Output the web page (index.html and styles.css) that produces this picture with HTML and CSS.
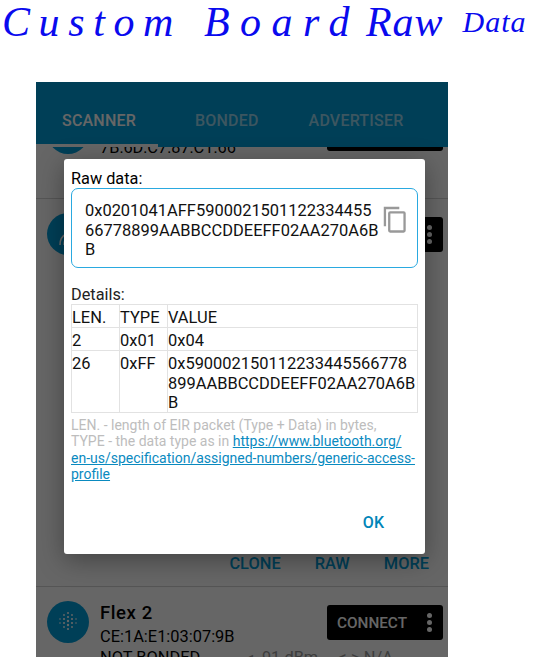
FILE: index.html
```html
<!DOCTYPE html>
<html lang="en">
<head>
  <meta charset="UTF-8">
  <title>Custom Board Raw Data</title>
  <meta name="viewport" content="width=device-width, initial-scale=1.0">
  <link rel="stylesheet" href="styles.css">
</head>
<body>
  <h1 class="ink-title">
    <span class="word-custom">Custom</span>
    <span class="word-board">Board</span>
    <span class="word-raw">Raw</span>
    <span class="word-data">Data</span>
  </h1>
  <div class="phone">
    <div class="appbar">
      <span class="tab active">SCANNER</span>
      <span class="tab tab-bonded">BONDED</span>
      <span class="tab tab-adv">ADVERTISER</span>
      <div class="tab-line"></div>
    </div>
    <div class="list">
      <div class="device first">
        <div class="avatar"></div>
        <div class="device-text">
          <div class="device-name">&nbsp;</div>
          <div class="device-addr">7B:6D:C7:87:C1:66</div>
        </div>
        <div class="connect"><span>CONNECT</span><i class="dots"></i></div>
      </div>
      <div class="device expanded">
        <div class="device-top">
          <div class="avatar">
            <svg width="42" height="42" viewBox="0 0 42 42" fill="none" stroke="#fff" stroke-width="1.6">
              <path d="M13 32c0-5 2-9 6-11"/>
              <path d="M17 32c0-3 1-6 3-7"/>
            </svg>
          </div>
          <div class="connect"><span>CONNECT</span><i class="dots"></i></div>
        </div>
        <div class="actions">
          <span>CLONE</span>
          <span>RAW</span>
          <span>MORE</span>
        </div>
      </div>
      <div class="device">
        <div class="avatar">
          <svg width="42" height="42" viewBox="0 0 42 42" fill="#fff">
            <circle cx="21" cy="12" r="1"/><circle cx="21" cy="16" r="1.1"/><circle cx="21" cy="20" r="1.2"/><circle cx="21" cy="24" r="1.2"/><circle cx="21" cy="28" r="1.1"/>
            <circle cx="17" cy="14" r=".9"/><circle cx="17" cy="18" r="1.1"/><circle cx="17" cy="22" r="1.1"/><circle cx="17" cy="26" r=".9"/>
            <circle cx="25" cy="14" r=".9"/><circle cx="25" cy="18" r="1.1"/><circle cx="25" cy="22" r="1.1"/><circle cx="25" cy="26" r=".9"/>
            <circle cx="13" cy="18" r=".8"/><circle cx="13" cy="22" r=".8"/><circle cx="29" cy="18" r=".8"/><circle cx="29" cy="22" r=".8"/>
          </svg>
        </div>
        <div class="device-text">
          <div class="device-name">Flex 2</div>
          <div class="device-addr">CE:1A:E1:03:07:9B</div>
          <div class="device-addr">NOT BONDED<span class="signal">&#9666; -91 dBm</span><span class="signal-b">&lt;-&gt; N/A</span></div>
        </div>
        <div class="connect"><span>CONNECT</span><i class="dots"></i></div>
      </div>
    </div>
    <div class="scrim"></div>
    <div class="dialog">
      <div class="dialog-label">Raw data:</div>
      <div class="raw-box">
        <div class="raw-value">0x0201041AFF5900021501122334455 66778899AABBCCDDEEFF02AA270A6B B</div>
        <svg class="copy-icon" width="23" height="27" viewBox="0 0 24 28" fill="none" stroke="#999" stroke-width="2.4">
          <path d="M2 21V2h15"/>
          <rect x="6.5" y="6.5" width="16" height="20" rx="1"/>
        </svg>
      </div>
      <div class="dialog-label details">Details:</div>
      <table class="eir">
        <tr><td class="c-len">LEN.</td><td class="c-type">TYPE</td><td>VALUE</td></tr>
        <tr><td>2</td><td>0x01</td><td>0x04</td></tr>
        <tr><td>26</td><td>0xFF</td><td>0x590002150112233445566778 899AABBCCDDEEFF02AA270A6B B</td></tr>
      </table>
      <p class="note">LEN. - length of EIR packet (Type + Data) in bytes,<br>TYPE - the data type as in <a href="#">https://www.bluetooth.org/<br>en-us/specification/assigned-numbers/generic-access-<br>profile</a></p>
      <div class="dialog-actions"><span class="ok">OK</span></div>
    </div>
  </div>
</body>
</html>
```

FILE: styles.css
```css
* { box-sizing:border-box; }
html, body { margin:0; height:100%; }
body { background:#fff; font-family:Roboto,'Liberation Sans',sans-serif; overflow:hidden; }

.ink-title { height:82px; margin:0; padding:0 0 0 2px; display:flex; align-items:flex-start; font-family:'Liberation Serif',serif; font-style:italic; font-weight:normal; font-size:42px; line-height:44px; color:#0a0aee; white-space:nowrap; }
.word-custom { letter-spacing:8.6px; }
.word-board { margin-left:22px; letter-spacing:10.5px; }
.word-raw { margin-left:6px; letter-spacing:1px; }
.word-data { margin-left:19px; font-size:30px; letter-spacing:1px; }

.phone { position:relative; width:412px; height:575px; margin-left:36px; overflow:hidden; background:#fff; }
.appbar { position:relative; z-index:1; height:65px; background:#009dd9; display:flex; align-items:center; padding:11px 0 0 26px; font-size:16px; font-weight:500; letter-spacing:.2px; color:#fff; }
.tab { color:rgba(255,255,255,.6); }
.tab.active { color:#fff; }
.tab-bonded { margin-left:59px; }
.tab-adv { margin-left:50px; }
.tab-line { position:absolute; left:0; bottom:0; width:122px; height:3px; background:#fff; }

.list { margin-top:-49px; }
.device { display:flex; height:101px; padding:14px 5px 0 11px; border-bottom:1px solid #d4d4d4; overflow:hidden; }
.avatar { flex:none; width:42px; height:42px; border-radius:50%; background:#009dd9; }
.avatar svg { display:block; }
.device-text { flex:1; min-width:0; padding-left:11px; }
.device-name { font-size:18.5px; font-weight:500; line-height:22px; letter-spacing:.6px; color:#000; padding-top:1px; margin-bottom:2px; }
.device-addr { font-size:16.4px; line-height:21px; color:#000; white-space:nowrap; }
.signal { margin-left:45px; color:#999; }
.signal-b { margin-left:20px; color:#999; }
.connect { flex:none; width:116px; height:35px; margin-top:4px; padding:0 11px 0 10px; background:#000; border-radius:3px; color:#fff; font-size:15.3px; font-weight:500; display:flex; align-items:center; justify-content:space-between; }
.dots { display:block; width:5px; height:5px; border-radius:50%; background:#fff; box-shadow:0 -7px 0 #fff, 0 7px 0 #fff; }

.device.expanded { display:block; height:388px; position:relative; }
.device-top { display:flex; justify-content:space-between; }
.actions { position:absolute; right:19px; bottom:12px; display:flex; gap:34px; font-size:16.4px; font-weight:500; color:#009dd9; }
.actions span { line-height:20px; }

.scrim { position:absolute; inset:0; z-index:2; background:rgba(0,0,0,.6); }

.dialog { position:absolute; z-index:3; left:28px; top:77px; width:361px; height:395px; padding:10px 7px 0; background:#fff; border-radius:3px; box-shadow:0 6px 26px rgba(0,0,0,.35); color:#000; }
.dialog-label { font-size:16.3px; line-height:19px; }
.dialog-label.details { margin-top:17px; color:#222; }
.raw-box { display:flex; width:347px; height:80px; padding:12px 0 0 13px; border:1px solid #2aa9e0; border-radius:7px; }
.raw-value { width:298px; font-size:16.45px; line-height:19.5px; color:#111; }
.copy-icon { flex:none; margin:5px 0 0 0; }

.eir { width:347px; border-collapse:collapse; table-layout:fixed; font-size:16.45px; line-height:19.2px; color:#111; }
.eir td { border:1px solid #e2e2e2; padding:3px 0 0 0; vertical-align:top; }
.c-len, .c-type { width:48px; }

.note { margin:4px 0 0; font-size:14px; line-height:16.4px; color:#bdbdbd; white-space:nowrap; }
.note a { color:#0a8abf; }
.dialog-actions { display:flex; justify-content:flex-end; padding:30px 34px 0 0; }
.ok { color:#0085b8; font-size:16px; font-weight:500; line-height:20px; }
```
